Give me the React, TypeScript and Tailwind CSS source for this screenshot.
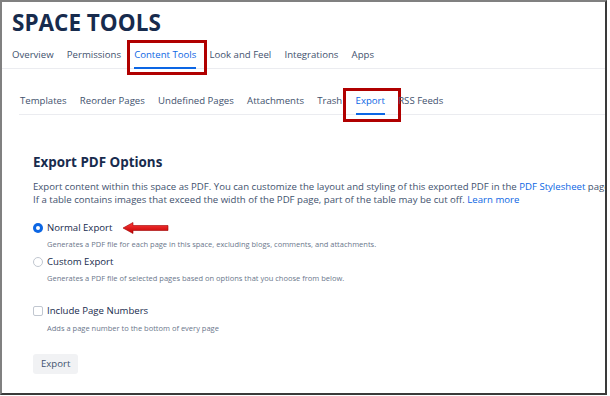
const font = { fontFamily: '"Open Sans", "Liberation Sans", sans-serif' };

function Radio({ checked }: { checked?: boolean }) {
  return checked ? (
    <span className="flex h-[10px] w-[10px] items-center justify-center rounded-full bg-[#0c66e4]">
      <span className="h-[4px] w-[4px] rounded-full bg-white" />
    </span>
  ) : (
    <span className="h-[10px] w-[10px] rounded-full border border-[#c1c7d0] bg-white" />
  );
}

function Arrow() {
  return (
    <svg width="46" height="12" viewBox="0 0 46 12" className="ml-[7px]">
      <defs>
        <linearGradient id="ar" x1="0" y1="0" x2="0" y2="1">
          <stop offset="0" stopColor="#ff3b3b" />
          <stop offset="1" stopColor="#c00000" />
        </linearGradient>
      </defs>
      <path d="M0 6 L10 0.5 L10 3.5 L45 3.5 L45 8.5 L10 8.5 L10 11.5 Z" fill="url(#ar)" stroke="#a00000" strokeWidth="0.6" />
    </svg>
  );
}

export default function App() {
  const topTabs = ["Overview", "Permissions", "Content Tools", "Look and Feel", "Integrations", "Apps"];
  const subTabs = ["Templates", "Reorder Pages", "Undefined Pages", "Attachments", "Trash", "Export", "RSS Feeds"];

  return (
    <div className="h-[396px] w-[610px] bg-white" style={font}>
      <div className="h-[395px] w-[607px] overflow-hidden border-2 border-[#808080] border-r-[#3a3a3a] border-b-[#3a3a3a] bg-white">
        <h1 className="pl-[10px] pt-[6px] text-[22.5px] font-bold leading-[30px] text-[#172b4d]">SPACE TOOLS</h1>

        {/* top tabs */}
        <div className="mt-[8px] flex border-b border-[#ebecf0] pl-[10px] text-[9.6px] text-[#42526e]">
          {topTabs.map((t) => (
            <div key={t} className="relative mr-[13.2px] pb-[6px] pt-[2px] leading-[14px]">
              {t === "Content Tools" ? (
                <>
                  <span className="text-[#0c66e4]">{t}</span>
                  <span className="absolute bottom-[-1px] left-0 right-0 h-[2px] bg-[#0c66e4]" />
                  <span className="absolute left-[-7px] right-[-11px] top-[-6px] bottom-[-7px] border-[3px] border-[#b00000]" />
                </>
              ) : (
                t
              )}
            </div>
          ))}
        </div>

        {/* sub tabs */}
        <div className="ml-[17px] mt-[25px] flex border-b border-[#ebecf0] pl-[1px] text-[9.6px] text-[#42526e]">
          {subTabs.map((t) => (
            <div key={t} className="relative mr-[13.3px] pb-[6px] leading-[14px]">
              {t === "Export" ? (
                <>
                  <span className="text-[#0c66e4]">{t}</span>
                  <span className="absolute bottom-[-1px] left-0 right-0 h-[2px] bg-[#0c66e4]" />
                  <span className="absolute left-[-13px] right-[-16px] top-[-6px] bottom-[-8px] border-[3px] border-[#b00000]" />
                </>
              ) : (
                t
              )}
            </div>
          ))}
        </div>

        <div className="pl-[31px] pt-[37px]">
          <h2 className="text-[13.4px] font-bold leading-[20px] text-[#172b4d]">Export PDF Options</h2>
          <p className="mt-[8px] whitespace-nowrap text-[9.6px] leading-[13px] text-[#42526e]">
            Export content within this space as PDF. You can customize the layout and styling of this exported PDF in the{" "}
            <span className="text-[#0c66e4]">PDF Stylesheet</span> page.
            <br />
            If a table contains images that exceed the width of the PDF page, part of the table may be cut off.{" "}
            <span className="text-[#0c66e4]">Learn more</span>
          </p>

          <div className="mt-[15px] flex items-center gap-[4px] text-[9.6px] leading-[14px] text-[#172b4d]">
            <Radio checked />
            <span>Normal Export</span>
            <Arrow />
          </div>
          <div className="ml-[14px] mt-[4px] text-[7.5px] leading-[10px] text-[#6b778c]">
            Generates a PDF file for each page in this space, excluding blogs, comments, and attachments.
          </div>

          <div className="mt-[6px] flex items-center gap-[4px] text-[9.6px] leading-[14px] text-[#172b4d]">
            <Radio />
            <span>Custom Export</span>
          </div>
          <div className="ml-[14px] mt-[4px] text-[7.5px] leading-[10px] text-[#6b778c]">
            Generates a PDF file of selected pages based on options that you choose from below.
          </div>

          <div className="mt-[21px] flex items-center gap-[4px] text-[9.6px] leading-[14px] text-[#172b4d]">
            <span className="h-[10px] w-[10px] rounded-[2px] border border-[#c1c7d0] bg-white" />
            <span>Include Page Numbers</span>
          </div>
          <div className="ml-[14px] mt-[5px] text-[7.5px] leading-[10px] text-[#6b778c]">
            Adds a page number to the bottom of every page
          </div>

          <button className="mt-[21px] rounded-[3px] bg-[#f1f2f4] px-[8px] py-[4px] text-[9.6px] leading-[12px] text-[#42526e]">
            Export
          </button>
        </div>
      </div>
    </div>
  );
}
